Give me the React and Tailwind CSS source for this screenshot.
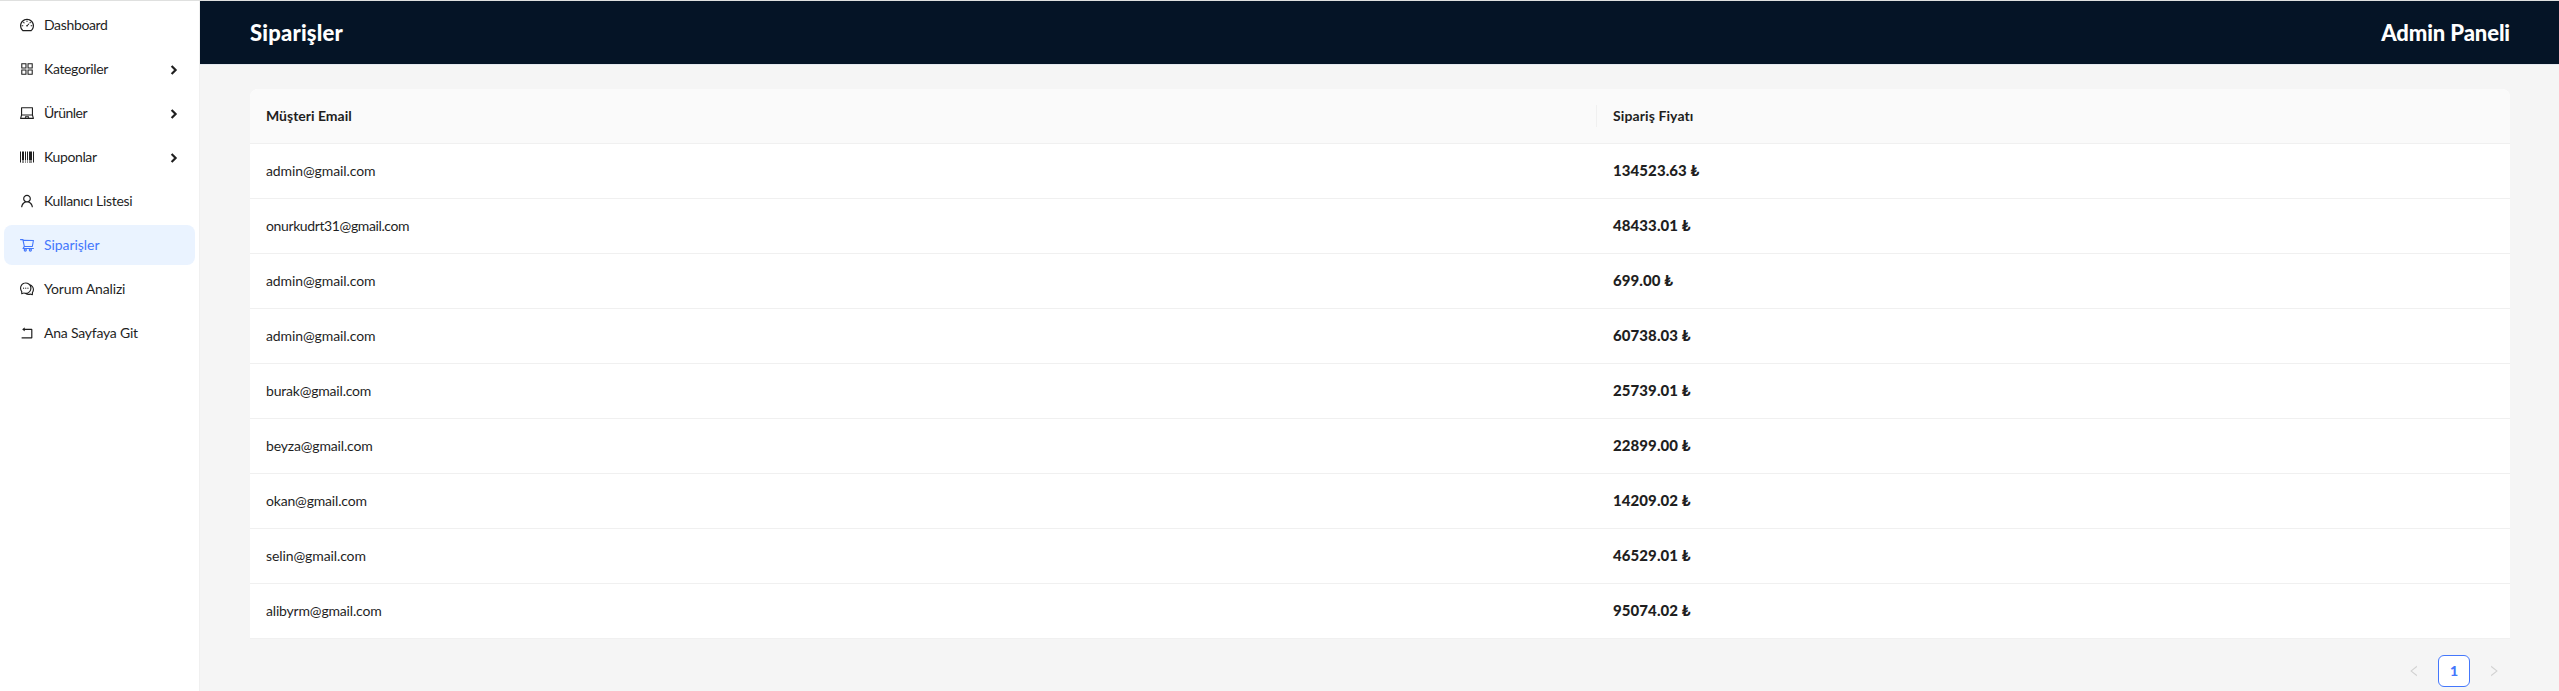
import {
  AiOutlineDashboard, AiOutlineAppstore, AiOutlineLaptop, AiOutlineBarcode, AiOutlineUser,
  AiOutlineShoppingCart, AiOutlineComment, AiOutlineRollback, AiOutlineLeft, AiOutlineRight,
} from "react-icons/ai";

const menu = [
  { icon: AiOutlineDashboard, label: "Dashboard", track: "tracking-[-0.35px]" },
  { icon: AiOutlineAppstore, label: "Kategoriler", track: "tracking-[-0.35px]", sub: true },
  { icon: AiOutlineLaptop, label: "Ürünler", track: "tracking-[-0.5px]", sub: true },
  { icon: AiOutlineBarcode, label: "Kuponlar", track: "tracking-[-0.38px]", sub: true },
  { icon: AiOutlineUser, label: "Kullanıcı Listesi", track: "tracking-[-0.3px]" },
  { icon: AiOutlineShoppingCart, label: "Siparişler", track: "tracking-[-0.05px]", active: true },
  { icon: AiOutlineComment, label: "Yorum Analizi", track: "tracking-[-0.15px]" },
  { icon: AiOutlineRollback, label: "Ana Sayfaya Git", track: "tracking-[-0.22px]" },
];

const orders = [
  ["admin@gmail.com", "134523.63", "tracking-[-0.1px]"],
  ["onurkudrt31@gmail.com", "48433.01", "tracking-[-0.38px]"],
  ["admin@gmail.com", "699.00", "tracking-[-0.1px]"],
  ["admin@gmail.com", "60738.03", "tracking-[-0.1px]"],
  ["burak@gmail.com", "25739.01", "tracking-[-0.2px]"],
  ["beyza@gmail.com", "22899.00", "tracking-[-0.16px]"],
  ["okan@gmail.com", "14209.02", "tracking-[-0.18px]"],
  ["selin@gmail.com", "46529.01", "tracking-[-0.1px]"],
  ["alibyrm@gmail.com", "95074.02", "tracking-[-0.18px]"],
];

function Sidebar() {
  return (
    <aside className="flex w-[200px] shrink-0 flex-col gap-1 border-r border-[#f0f0f0] bg-white px-1 pt-1">
      {menu.map(({ icon: Icon, label, track, sub, active }) => (
        <div
          key={label}
          className={`flex h-10 w-[191px] items-center rounded-lg pl-[15px] pr-[17px] ${active ? "bg-[#eaf3ff] text-[#4477fc]" : "text-[#1f1f1f]"}`}
        >
          <Icon className="size-4 shrink-0" />
          <span className={`ml-[9px] flex-1 whitespace-nowrap ${track}`}>{label}</span>
          {sub && (
            <svg viewBox="0 0 8 10" className="mt-px h-[10px] w-2" fill="none" stroke="currentColor" strokeWidth="2.2">
              <path d="M1.6 1l4 4-4 4" />
            </svg>
          )}
        </div>
      ))}
    </aside>
  );
}

export default function App() {
  return (
    <div className="flex h-[691px] w-[2559px] flex-col overflow-hidden border-t border-[#dfe0df] bg-[#f5f5f5] font-['Lato','Noto_Sans',sans-serif] text-sm text-[#1f1f1f]">
      <div className="flex flex-1">
        <Sidebar />
        <main className="flex flex-1 flex-col">
          <header className="flex h-16 items-center justify-between border-b border-[#e5e9ef] bg-[#051426] pr-[49px] pl-[50px] text-[22px] font-black text-white">
            <h2 className="tracking-[0.2px]">Siparişler</h2>
            <h2 className="tracking-[-0.1px]">Admin Paneli</h2>
          </header>
          <section className="mt-6 mr-[49px] ml-[50px]">
            <div className="overflow-hidden rounded-t-lg bg-white">
              <div className="flex h-[55px] items-center border-b border-[#f0f0f0] bg-[#fafafa] font-bold">
                <div className="flex h-[22px] w-[1347px] items-center border-r border-[#f0f0f0] pl-4">Müşteri Email</div>
                <div className="pl-4 tracking-[0.1px]">Sipariş Fiyatı</div>
              </div>
              {orders.map(([email, price, track], i) => (
                <div key={i} className="flex h-[55px] items-center border-b border-[#f0f0f0]">
                  <div className={`w-[1347px] pl-4 ${track}`}>{email}</div>
                  <div className="pl-4 text-[15px] font-black tracking-[0.08px]">{price} ₺</div>
                </div>
              ))}
            </div>
            <div className="mt-4 flex items-center justify-end gap-2">
              <span className="flex size-8 items-center justify-center text-[#d2d2d2]"><AiOutlineLeft className="size-[14px]" /></span>
              <span className="flex size-8 items-center justify-center rounded-md border border-[#4477fc] bg-white font-black text-[#4477fc]">1</span>
              <span className="flex size-8 items-center justify-center text-[#d2d2d2]"><AiOutlineRight className="size-[14px]" /></span>
            </div>
          </section>
        </main>
      </div>
    </div>
  );
}
